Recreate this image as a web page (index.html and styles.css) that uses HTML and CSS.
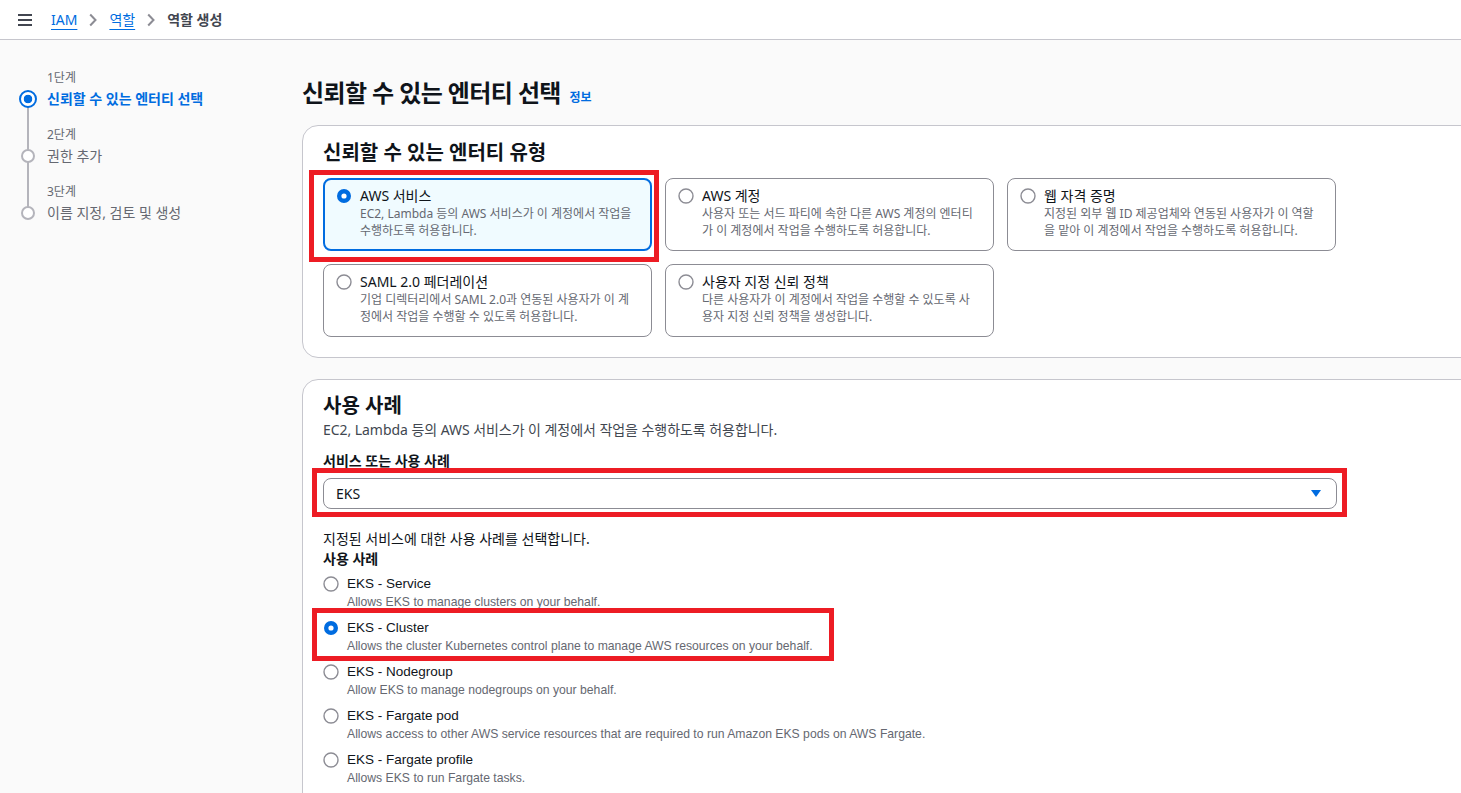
FILE: index.html
```html
<!DOCTYPE html>
<html lang="ko">
<head>
<meta charset="utf-8">
<title>역할 생성 - IAM</title>
<link rel="stylesheet" href="styles.css">
</head>
<body>
<header class="topbar">
  <svg class="menu" width="16" height="14" viewBox="0 0 16 14"><path d="M1 2h14M1 7h14M1 12h14" stroke="#424650" stroke-width="2" fill="none"/></svg>
  <nav class="crumbs">
    <a class="crumb-link" href="#">IAM</a>
    <svg class="chev" width="8" height="14" viewBox="0 0 8 14"><path d="M1.2 1.5L6.5 7 1.2 12.5" stroke="#8c8c94" stroke-width="2" fill="none"/></svg>
    <a class="crumb-link" href="#">역할</a>
    <svg class="chev" width="8" height="14" viewBox="0 0 8 14"><path d="M1.2 1.5L6.5 7 1.2 12.5" stroke="#8c8c94" stroke-width="2" fill="none"/></svg>
    <span class="crumb-current">역할 생성</span>
  </nav>
</header>

<div class="layout">
  <nav class="steps">
    <div class="step">
      <div class="step-label">1단계</div>
      <div class="step-row"><span class="step-marker"><span class="dot dot-active"></span></span><span class="step-title active">신뢰할 수 있는 엔터티 선택</span></div>
    </div>
    <div class="step">
      <div class="step-label">2단계</div>
      <div class="step-row"><span class="step-marker"><span class="dot"></span></span><span class="step-title">권한 추가</span></div>
    </div>
    <div class="step">
      <div class="step-label">3단계</div>
      <div class="step-row"><span class="step-marker"><span class="dot"></span></span><span class="step-title">이름 지정, 검토 및 생성</span></div>
    </div>
  </nav>

  <main class="content">
    <h1 class="page-title">신뢰할 수 있는 엔터티 선택 <a class="info" href="#">정보</a></h1>

    <section class="panel">
      <h2 class="panel-title">신뢰할 수 있는 엔터티 유형</h2>
      <div class="tiles">
        <div class="tile selected">
          <svg class="radio" width="16" height="16" viewBox="0 0 16 16"><circle cx="8" cy="8" r="4.8" fill="#fff" stroke="#006ce0" stroke-width="4.4"/></svg>
          <div class="tile-text">
            <div class="tile-title">AWS 서비스</div>
            <div class="tile-desc">EC2, Lambda 등의 AWS 서비스가 이 계정에서 작업을<br>수행하도록 허용합니다.</div>
          </div>
          <span class="mark mark-tile"></span>
        </div>
        <div class="tile">
          <svg class="radio" width="16" height="16" viewBox="0 0 16 16"><circle cx="8" cy="8" r="7" fill="#fff" stroke="#8c8c94" stroke-width="1.4"/></svg>
          <div class="tile-text">
            <div class="tile-title">AWS 계정</div>
            <div class="tile-desc">사용자 또는 서드 파티에 속한 다른 AWS 계정의 엔터티<br>가 이 계정에서 작업을 수행하도록 허용합니다.</div>
          </div>
        </div>
        <div class="tile">
          <svg class="radio" width="16" height="16" viewBox="0 0 16 16"><circle cx="8" cy="8" r="7" fill="#fff" stroke="#8c8c94" stroke-width="1.4"/></svg>
          <div class="tile-text">
            <div class="tile-title">웹 자격 증명</div>
            <div class="tile-desc">지정된 외부 웹 ID 제공업체와 연동된 사용자가 이 역할<br>을 맡아 이 계정에서 작업을 수행하도록 허용합니다.</div>
          </div>
        </div>
        <div class="tile">
          <svg class="radio" width="16" height="16" viewBox="0 0 16 16"><circle cx="8" cy="8" r="7" fill="#fff" stroke="#8c8c94" stroke-width="1.4"/></svg>
          <div class="tile-text">
            <div class="tile-title">SAML 2.0 페더레이션</div>
            <div class="tile-desc">기업 디렉터리에서 SAML 2.0과 연동된 사용자가 이 계<br>정에서 작업을 수행할 수 있도록 허용합니다.</div>
          </div>
        </div>
        <div class="tile">
          <svg class="radio" width="16" height="16" viewBox="0 0 16 16"><circle cx="8" cy="8" r="7" fill="#fff" stroke="#8c8c94" stroke-width="1.4"/></svg>
          <div class="tile-text">
            <div class="tile-title">사용자 지정 신뢰 정책</div>
            <div class="tile-desc">다른 사용자가 이 계정에서 작업을 수행할 수 있도록 사<br>용자 지정 신뢰 정책을 생성합니다.</div>
          </div>
        </div>
      </div>
    </section>

    <section class="panel panel-usecase">
      <h2 class="panel-title">사용 사례</h2>
      <p class="panel-desc">EC2, Lambda 등의 AWS 서비스가 이 계정에서 작업을 수행하도록 허용합니다.</p>
      <div class="field-label">서비스 또는 사용 사례</div>
      <div class="select">
        <span class="select-value">EKS</span>
        <svg class="caret" width="10" height="7" viewBox="0 0 10 7"><path d="M0 0h10L5 7z" fill="#006ce0"/></svg>
        <span class="mark mark-select"></span>
      </div>
      <p class="hint">지정된 서비스에 대한 사용 사례를 선택합니다.</p>
      <div class="field-label tight">사용 사례</div>
      <div class="options">
        <div class="option">
          <svg class="radio" width="16" height="16" viewBox="0 0 16 16"><circle cx="8" cy="8" r="7" fill="#fff" stroke="#8c8c94" stroke-width="1.4"/></svg>
          <div>
            <div class="opt-title">EKS - Service</div>
            <div class="opt-desc">Allows EKS to manage clusters on your behalf.</div>
          </div>
        </div>
        <div class="option">
          <svg class="radio" width="16" height="16" viewBox="0 0 16 16"><circle cx="8" cy="8" r="4.8" fill="#fff" stroke="#006ce0" stroke-width="4.4"/></svg>
          <div>
            <div class="opt-title">EKS - Cluster</div>
            <div class="opt-desc">Allows the cluster Kubernetes control plane to manage AWS resources on your behalf.</div>
          </div>
          <span class="mark mark-option"></span>
        </div>
        <div class="option">
          <svg class="radio" width="16" height="16" viewBox="0 0 16 16"><circle cx="8" cy="8" r="7" fill="#fff" stroke="#8c8c94" stroke-width="1.4"/></svg>
          <div>
            <div class="opt-title">EKS - Nodegroup</div>
            <div class="opt-desc">Allow EKS to manage nodegroups on your behalf.</div>
          </div>
        </div>
        <div class="option">
          <svg class="radio" width="16" height="16" viewBox="0 0 16 16"><circle cx="8" cy="8" r="7" fill="#fff" stroke="#8c8c94" stroke-width="1.4"/></svg>
          <div>
            <div class="opt-title">EKS - Fargate pod</div>
            <div class="opt-desc">Allows access to other AWS service resources that are required to run Amazon EKS pods on AWS Fargate.</div>
          </div>
        </div>
        <div class="option">
          <svg class="radio" width="16" height="16" viewBox="0 0 16 16"><circle cx="8" cy="8" r="7" fill="#fff" stroke="#8c8c94" stroke-width="1.4"/></svg>
          <div>
            <div class="opt-title">EKS - Fargate profile</div>
            <div class="opt-desc">Allows EKS to run Fargate tasks.</div>
          </div>
        </div>
      </div>
    </section>
  </main>
</div>
</body>
</html>
```

FILE: styles.css
```css
html, body {
  margin: 0;
  padding: 0;
}
body {
  width: 1461px;
  height: 793px;
  overflow: hidden;
  background: #fafafa;
  color: #0f141a;
  font-family: "Noto Sans", "Noto Sans CJK KR", sans-serif;
}

/* top bar */
.topbar {
  height: 39px;
  background: #fff;
  border-bottom: 1px solid #c6c6cd;
  display: flex;
  align-items: center;
  padding-left: 17px;
}
.menu {
  display: block;
  margin-right: 18px;
}
.crumbs {
  display: flex;
  align-items: center;
  font-size: 14px;
  line-height: 20px;
}
.crumb-link {
  color: #006ce0;
  text-decoration: underline;
  text-underline-offset: 4px;
  text-decoration-thickness: 1px;
}
.chev {
  display: block;
  margin: 0 12px;
}
.crumb-current {
  color: #424650;
  font-weight: 700;
}

/* layout */
.layout {
  display: flex;
  align-items: flex-start;
}
.steps {
  flex: none;
  width: 302px;
  box-sizing: border-box;
  padding: 30px 0 0 19px;
}
.step {
  padding-bottom: 17px;
}
.step-label {
  padding-left: 28px;
  font-size: 12px;
  line-height: 16px;
  color: #656871;
  margin-bottom: 2px;
}
.step-row {
  display: flex;
  align-items: center;
}
.step-marker {
  flex: none;
  width: 18px;
  height: 22px;
  margin-right: 10px;
  position: relative;
  display: flex;
  align-items: center;
  justify-content: center;
}
.step:not(:last-child) .step-marker::after {
  content: "";
  position: absolute;
  left: 8px;
  top: 11px;
  width: 2px;
  height: 57px;
  background: #b4b4bb;
}
.dot {
  position: relative;
  z-index: 1;
  width: 14px;
  height: 14px;
  box-sizing: border-box;
  border: 2px solid #b4b4bb;
  border-radius: 50%;
  background: #fff;
}
.dot-active {
  width: 18px;
  height: 18px;
  border-color: #006ce0;
  background: radial-gradient(circle, #006ce0 0, #006ce0 4px, #fff 4.6px);
}
.step-title {
  font-size: 14px;
  line-height: 22px;
  color: #656871;
}
.step-title.active {
  color: #006ce0;
  font-weight: 700;
}

/* content */
.content {
  flex: none;
  width: 1300px;
  padding-top: 38px;
}
.page-title {
  margin: 0 0 17px;
  height: 30px;
  font-size: 24px;
  line-height: 30px;
  font-weight: 700;
  letter-spacing: -0.6px;
}
.info {
  font-size: 12px;
  line-height: 16px;
  font-weight: 700;
  letter-spacing: 0;
  color: #006ce0;
  text-decoration: none;
  margin-left: 3px;
}
.panel {
  background: #fff;
  border: 1px solid #c6c6cd;
  border-radius: 16px;
  padding: 15px 20px 20px;
  box-sizing: border-box;
  width: 1300px;
}
.panel-usecase {
  margin-top: 21px;
  padding-top: 14px;
  height: 460px;
}
.panel-title {
  margin: 0 0 13px;
  height: 24px;
  font-size: 20px;
  line-height: 24px;
  font-weight: 700;
}
.panel-usecase .panel-title {
  margin-bottom: 2px;
}

/* tiles */
.tiles {
  display: grid;
  grid-template-columns: repeat(3, 329px);
  column-gap: 13px;
  row-gap: 13px;
}
.tile {
  position: relative;
  display: flex;
  align-items: flex-start;
  gap: 8px;
  border: 1px solid #8c8c94;
  border-radius: 8px;
  padding: 7px 12px 11px 12px;
  background: #fff;
}
.tile.selected {
  border: 2px solid #006ce0;
  padding: 6px 11px 10px 11px;
  background: #f0fbff;
}
.radio {
  flex: none;
  display: block;
  margin-top: 2px;
}
.tile-title {
  height: 20px;
  font-size: 14px;
  line-height: 20px;
  color: #0f141a;
}
.tile-desc {
  height: 33px;
  font-size: 12px;
  line-height: 16.5px;
  color: #656871;
  white-space: nowrap;
}

/* annotations */
.mark {
  position: absolute;
  box-sizing: border-box;
  border: 5px solid #ed1c24;
  pointer-events: none;
  z-index: 2;
}
.mark-tile {
  left: -16px;
  top: -10px;
  width: 350px;
  height: 92px;
}
.mark-select {
  left: -12px;
  top: -11px;
  width: 1035px;
  height: 49px;
}
.mark-option {
  left: -11px;
  top: -10px;
  width: 522px;
  height: 53px;
}

/* use case */
.panel-desc {
  margin: 0;
  height: 20px;
  font-size: 14px;
  line-height: 20px;
  color: #414750;
  letter-spacing: -0.05px;
}
.field-label {
  margin-top: 11px;
  height: 20px;
  font-size: 14px;
  line-height: 20px;
  font-weight: 700;
}
.field-label.tight {
  margin-top: 0;
}
.select {
  position: relative;
  margin-top: 7px;
  width: 1014px;
  height: 31px;
  box-sizing: border-box;
  border: 1px solid #8c8c94;
  border-radius: 8px;
  background: #fff;
  display: flex;
  align-items: center;
  justify-content: space-between;
  padding: 0 15px 0 12px;
}
.select-value {
  font-size: 14px;
  line-height: 20px;
}
.caret {
  display: block;
}
.hint {
  margin: 20px 0 0;
  height: 20px;
  font-size: 14px;
  line-height: 20px;
}
.options {
  margin-top: 5px;
  display: flex;
  flex-direction: column;
  gap: 8px;
}
.option {
  position: relative;
  display: flex;
  align-items: flex-start;
  gap: 8px;
  width: max-content;
}
.opt-title {
  font-family: "Liberation Sans", Arial, sans-serif;
  font-size: 13.5px;
  line-height: 20px;
  color: #0f141a;
}
.opt-desc {
  font-family: "Liberation Sans", Arial, sans-serif;
  font-size: 12.2px;
  line-height: 16px;
  color: #656871;
}
```
